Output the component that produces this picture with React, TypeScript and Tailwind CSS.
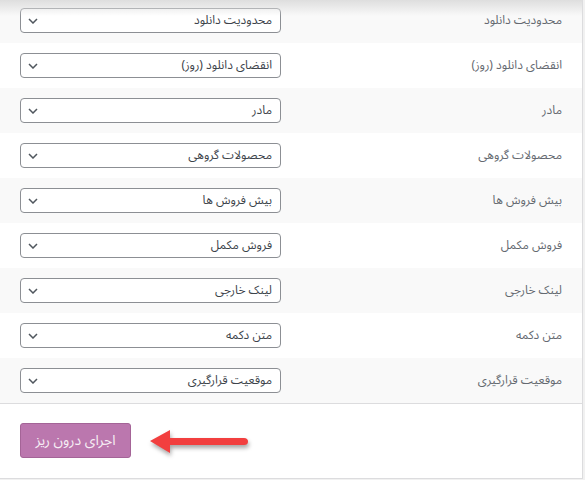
const rows = [
  { label: "محدودیت دانلود", value: "محدودیت دانلود" },
  { label: "انقضای دانلود (روز)", value: "انقضای دانلود (روز)" },
  { label: "مادر", value: "مادر" },
  { label: "محصولات گروهی", value: "محصولات گروهی" },
  { label: "بیش فروش ها", value: "بیش فروش ها" },
  { label: "فروش مکمل", value: "فروش مکمل" },
  { label: "لینک خارجی", value: "لینک خارجی" },
  { label: "متن دکمه", value: "متن دکمه" },
  { label: "موقعیت قرارگیری", value: "موقعیت قرارگیری" },
];

function Chevron() {
  return (
    <svg width="10" height="6" viewBox="0 0 10 6" className="shrink-0">
      <path d="M1 1l4 4 4-4" fill="none" stroke="#50575e" strokeWidth="1.5" />
    </svg>
  );
}

function Arrow() {
  return (
    <svg width="104" height="30" viewBox="0 0 104 30" className="drop-shadow-[1px_3px_2px_rgba(0,0,0,0.35)]">
      <path d="M2 14 L22 3 L22 11 L96 11 Q100 11 100 14.5 Q100 18 96 18 L22 18 L22 26 Z" fill="#f23f3f" />
    </svg>
  );
}

export default function App() {
  return (
    <div
      className="w-[585px] h-[480px] bg-[#f1f1f1] overflow-hidden"
      style={{ fontFamily: '"Noto Sans Arabic", "Noto Naskh Arabic", "DejaVu Sans", sans-serif' }}
    >
      <div className="relative w-[583px] h-[479px] bg-white border-r border-b border-[#dcdcde] overflow-hidden">
        <div className="pointer-events-none absolute inset-x-0 top-0 h-[16px] bg-gradient-to-b from-[#dedede] to-transparent" />
        <div className="-mt-[2px]">
          {rows.map((row, i) => (
            <div
              key={i}
              className={`flex items-center h-[45px] pl-[20px] pr-[20px] ${i % 2 === 0 ? "bg-[#f9f9f9]" : "bg-white"}`}
            >
              <div className="flex items-center justify-between w-[261px] h-[25px] border border-[#8c8f94] rounded-[4px] bg-white pl-[7px] pr-[8px]">
                <Chevron />
                <span dir="rtl" className="text-[12px] text-[#3c434a]">{row.value}</span>
              </div>
              <div dir="rtl" className="flex-1 text-[12px] text-[#646970] text-right">{row.label}</div>
            </div>
          ))}
        </div>
        <div className="border-t border-[#dcdcde] flex items-center h-[75px] pl-[20px] pb-[1px]">
          <button className="w-[111px] h-[35px] rounded-[3px] bg-[#bb77ae] border border-[#a46497] text-[#f6eef4] text-[14px]" dir="rtl">
            اجرای درون ریز
          </button>
          <div className="ml-[17px] mt-[2px]">
            <Arrow />
          </div>
        </div>
      </div>
    </div>
  );
}
